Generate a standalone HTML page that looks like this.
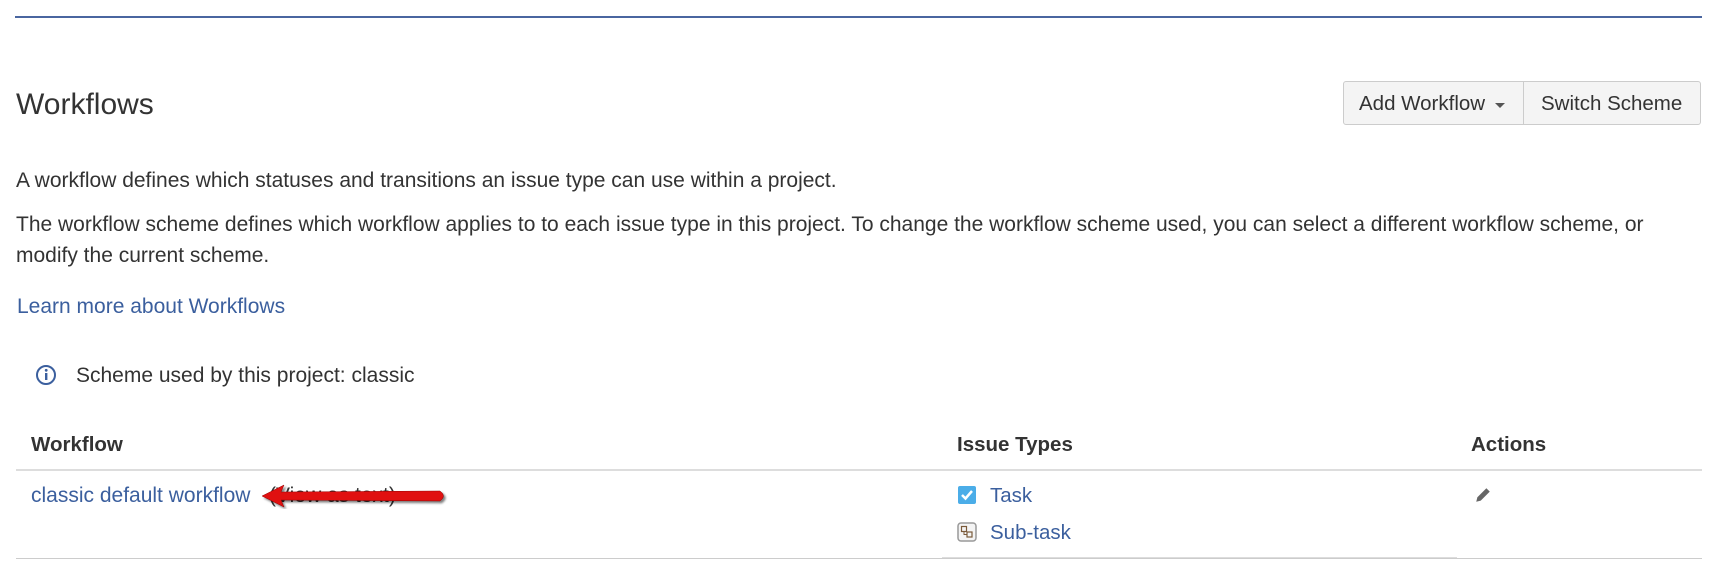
<!DOCTYPE html>
<html><head><meta charset="utf-8"><style>
body{margin:0;width:1722px;height:577px;background:#fff;font-family:"Liberation Sans",sans-serif;color:#333;position:relative;overflow:hidden}
.a{position:absolute;white-space:nowrap}
.link{color:#3b5f9e}
</style></head><body>
<div class="a" style="left:15px;top:16px;width:1687px;height:2px;background:#4a66a0"></div>
<div class="a" style="left:16px;top:88px;font-size:30px;color:#333">Workflows</div>
<div class="a" style="left:1343px;top:81px;width:356px;height:42px;border:1px solid #ccc;border-radius:3px;background:#f4f4f4"></div>
<div class="a" style="left:1523px;top:82px;width:1px;height:42px;background:#ccc"></div>
<div class="a" style="left:1359px;top:92px;font-size:20.5px">Add Workflow</div>
<div class="a" style="left:1495px;top:103px;width:0;height:0;border-left:5px solid transparent;border-right:5px solid transparent;border-top:5px solid #555"></div>
<div class="a" style="left:1541px;top:92px;font-size:20.5px">Switch Scheme</div>
<div class="a" style="left:16px;top:169px;font-size:21px">A workflow defines which statuses and transitions an issue type can use within a project.</div>
<div class="a" style="left:16px;top:213px;font-size:21px">The workflow scheme defines which workflow applies to to each issue type in this project. To change the workflow scheme used, you can select a different workflow scheme, or</div>
<div class="a" style="left:16px;top:244px;font-size:21px">modify the current scheme.</div>
<div class="a link" style="left:17px;top:295px;font-size:21px">Learn more about Workflows</div>
<svg class="a" style="left:35px;top:364px" width="22" height="22" viewBox="0 0 22 22"><circle cx="11" cy="11" r="9" fill="none" stroke="#3b5f9e" stroke-width="2"/><rect x="10" y="9" width="2.4" height="7" fill="#3b5f9e"/><circle cx="11.2" cy="6.3" r="1.4" fill="#3b5f9e"/></svg>
<div class="a" style="left:76px;top:364px;font-size:21px">Scheme used by this project: classic</div>
<div class="a" style="left:31px;top:433px;font-size:20.5px;font-weight:bold">Workflow</div>
<div class="a" style="left:957px;top:433px;font-size:20.5px;font-weight:bold">Issue Types</div>
<div class="a" style="left:1471px;top:433px;font-size:20.5px;font-weight:bold">Actions</div>
<div class="a" style="left:16px;top:469px;width:1686px;height:2px;background:#ddd"></div>
<div class="a link" style="left:31px;top:484px;font-size:21px">classic default workflow</div>
<div class="a" style="left:269px;top:484px;font-size:21px;color:#333">(View as text)</div>
<svg class="a" style="left:258px;top:483px" width="190" height="26" viewBox="0 0 190 26"><path d="M4 13 L26 2 L23 9 L182 8 Q189 13 182 18 L23 17 L26 24 Z" fill="#e01010" stroke="#900" stroke-width=".5" style="filter:drop-shadow(2px 2px 1px rgba(0,0,0,.5))"/></svg>
<svg class="a" style="left:957px;top:485px" width="20" height="20" viewBox="0 0 20 20"><rect x="1" y="1" width="18" height="18" rx="2" fill="#4bade8"/><path d="M5 10 L8.5 13.5 L15 6" stroke="#fff" stroke-width="2.5" fill="none"/></svg>
<div class="a link" style="left:962px;top:484px;font-size:20.5px;padding-left:28px">Task</div>
<svg class="a" style="left:957px;top:522px" width="20" height="20" viewBox="0 0 20 20"><rect x="1" y="1" width="18" height="18" rx="3" fill="#f4f4f4" stroke="#999" stroke-width="1.5"/><rect x="4.5" y="4.5" width="5" height="5" fill="none" stroke="#7a5a3a" stroke-width="1.2"/><rect x="10" y="10" width="5" height="5" fill="none" stroke="#7a5a3a" stroke-width="1.2"/><path d="M7 9.5 V12.5 H10" stroke="#7a5a3a" fill="none"/></svg>
<div class="a link" style="left:962px;top:521px;font-size:20.5px;padding-left:28px">Sub-task</div>
<svg class="a" style="left:1474px;top:486px" width="18" height="18" viewBox="0 0 16 16"><path d="M2 14 L3 10 L11 2 L14 5 L6 13 Z" fill="#666"/></svg>
<div class="a" style="left:16px;top:558px;width:1686px;height:1px;background:#ccc"></div>
<div class="a" style="left:942px;top:557px;width:515px;height:1px;background:#ddd"></div>
</body></html>
